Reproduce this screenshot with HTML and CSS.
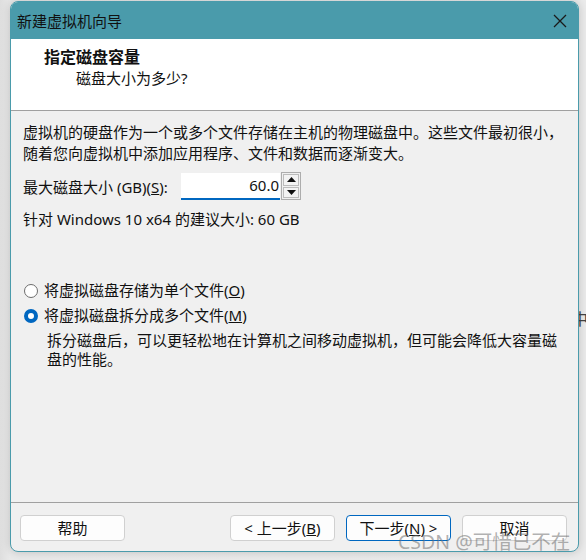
FILE: index.html
```html
<!DOCTYPE html>
<html lang="zh-CN">
<head>
<meta charset="utf-8">
<title>新建虚拟机向导</title>
<link rel="stylesheet" href="styles.css">
</head>
<body>
<span class="behind">中</span>
<div class="window">
  <div class="titlebar">
    <span class="title">新建虚拟机向导</span>
    <svg class="close" width="14" height="14" viewBox="0 0 14 14"><path d="M1 1 L13 13 M13 1 L1 13" stroke="#1a1a1a" stroke-width="1.3" fill="none"/></svg>
  </div>
  <div class="header">
    <div class="h-title">指定磁盘容量</div>
    <div class="h-sub">磁盘大小为多少?</div>
  </div>
  <div class="content">
    <p class="para">虚拟机的硬盘作为一个或多个文件存储在主机的物理磁盘中。这些文件最初很小，<br>随着您向虚拟机中添加应用程序、文件和数据而逐渐变大。</p>
    <div class="field">
      <span class="label">最大磁盘大小 (GB)(<u>S</u>):</span>
      <div class="input">60.0</div>
      <div class="spin">
        <div class="spin-btn"><svg width="9" height="5" viewBox="0 0 9 5"><path d="M0 5 L4.5 0 L9 5 Z" fill="#111"/></svg></div>
        <div class="spin-btn"><svg width="9" height="5" viewBox="0 0 9 5"><path d="M0 0 L4.5 5 L9 0 Z" fill="#111"/></svg></div>
      </div>
    </div>
    <p class="rec">针对 Windows 10 x64 的建议大小: 60 GB</p>
    <div class="radio-row first">
      <span class="radio"></span>
      <span>将虚拟磁盘存储为单个文件(<u>O</u>)</span>
    </div>
    <div class="radio-row">
      <span class="radio checked"></span>
      <span>将虚拟磁盘拆分成多个文件(<u>M</u>)</span>
    </div>
    <p class="desc">拆分磁盘后，可以更轻松地在计算机之间移动虚拟机，但可能会降低大容量磁<br>盘的性能。</p>
  </div>
  <div class="footer">
    <button class="btn">帮助</button>
    <span class="spacer"></span>
    <button class="btn">&lt; 上一步(<u>B</u>)</button>
    <button class="btn primary">下一步(<u>N</u>) &gt;</button>
    <button class="btn">取消</button>
  </div>
</div>
<span class="watermark">CSDN @可惜已不在</span>
</body>
</html>
```
FILE: styles.css
```css
* { box-sizing: border-box; }
html, body { margin: 0; padding: 0; }
body {
  width: 586px;
  height: 560px;
  overflow: hidden;
  position: relative;
  background: linear-gradient(90deg, #dedede 0px, #e9e9e9 10px, #ebebeb 100%);
  font-family: "Noto Sans", "Noto Sans CJK SC", sans-serif;
  font-size: 15px;
  color: #111;
}
.behind {
  position: absolute;
  left: 572px;
  top: 306px;
  font-size: 16px;
  color: #444;
}
.window {
  position: relative;
  margin: 1px 0 0 10px;
  width: 569px;
  height: 551px;
  border: 1px solid #4a9bab;
  border-radius: 8px;
  background: #f0f0f0;
  box-shadow: 0 0 10px rgba(0,0,0,0.18);
  display: flex;
  flex-direction: column;
  overflow: hidden;
}
.titlebar {
  height: 37px;
  background: #4a9bab;
  display: flex;
  align-items: center;
  padding: 0 11px 0 6px;
  flex: none;
}
.title {
  flex: 1;
  font-size: 15px;
  color: #111;
}
.close { display: block; }
.header {
  flex: none;
  height: 72px;
  background: #fff;
  border-bottom: 1px solid #a0a0a0;
  padding: 8px 0 0 33px;
  line-height: 20px;
}
.h-title { font-weight: bold; font-size: 16px; height: 21px; }
.h-sub { padding-left: 32px; }
.content {
  flex: 1;
  padding: 11px 0 0 12px;
}
p { margin: 0; }
.para { line-height: 21px; white-space: nowrap; }
.field {
  display: flex;
  align-items: center;
  margin-top: 8px;
  height: 28px;
}
.label { width: 158px; }
.input {
  width: 99px;
  height: 27px;
  background: #fff;
  border-bottom: 2px solid #0067c0;
  text-align: right;
  padding-right: 1px;
  line-height: 25px;
}
.spin {
  width: 20px;
  height: 28px;
  margin-left: 1px;
  border: 1px solid #adadad;
  display: flex;
  flex-direction: column;
  padding: 1px;
  gap: 1px;
}
.spin-btn {
  flex: 1;
  border: 1px solid #bcbcbc;
  background: #f3f3f3;
  display: flex;
  align-items: center;
  justify-content: center;
}
.spin-btn svg { display: block; }
.rec { margin-top: 9px; line-height: 21px; }
.radio-row {
  display: flex;
  align-items: center;
  gap: 6px;
  line-height: 21px;
  margin-top: 4px;
}
.radio-row.first { margin-top: 50px; }
.radio {
  width: 14px;
  height: 14px;
  margin-left: 1px;
  border-radius: 50%;
  border: 1px solid #6d6d6d;
  background: #fff;
  flex: none;
}
.radio.checked {
  border: 4px solid #0067c0;
  background: #fff;
}
.desc {
  margin: 5px 0 0 24px;
  line-height: 19px;
  white-space: nowrap;
}
.footer {
  flex: none;
  height: 49px;
  border-top: 1px solid #a0a0a0;
  display: flex;
  align-items: flex-start;
  padding: 12px 11px 0 9px;
  gap: 11px;
}
.spacer { flex: 1; }
.btn {
  width: 105px;
  height: 26px;
  background: #fdfdfd;
  border: 1px solid #d0d0d0;
  border-radius: 4px;
  font: inherit;
  font-size: 15px;
  color: #111;
  padding: 0;
  line-height: 22px;
}
.btn.primary { border-color: #0067c0; }
.watermark {
  position: absolute;
  left: 398px;
  top: 526px;
  font-size: 19.5px;
  color: rgba(110,110,110,0.55);
  white-space: nowrap;
}
```
